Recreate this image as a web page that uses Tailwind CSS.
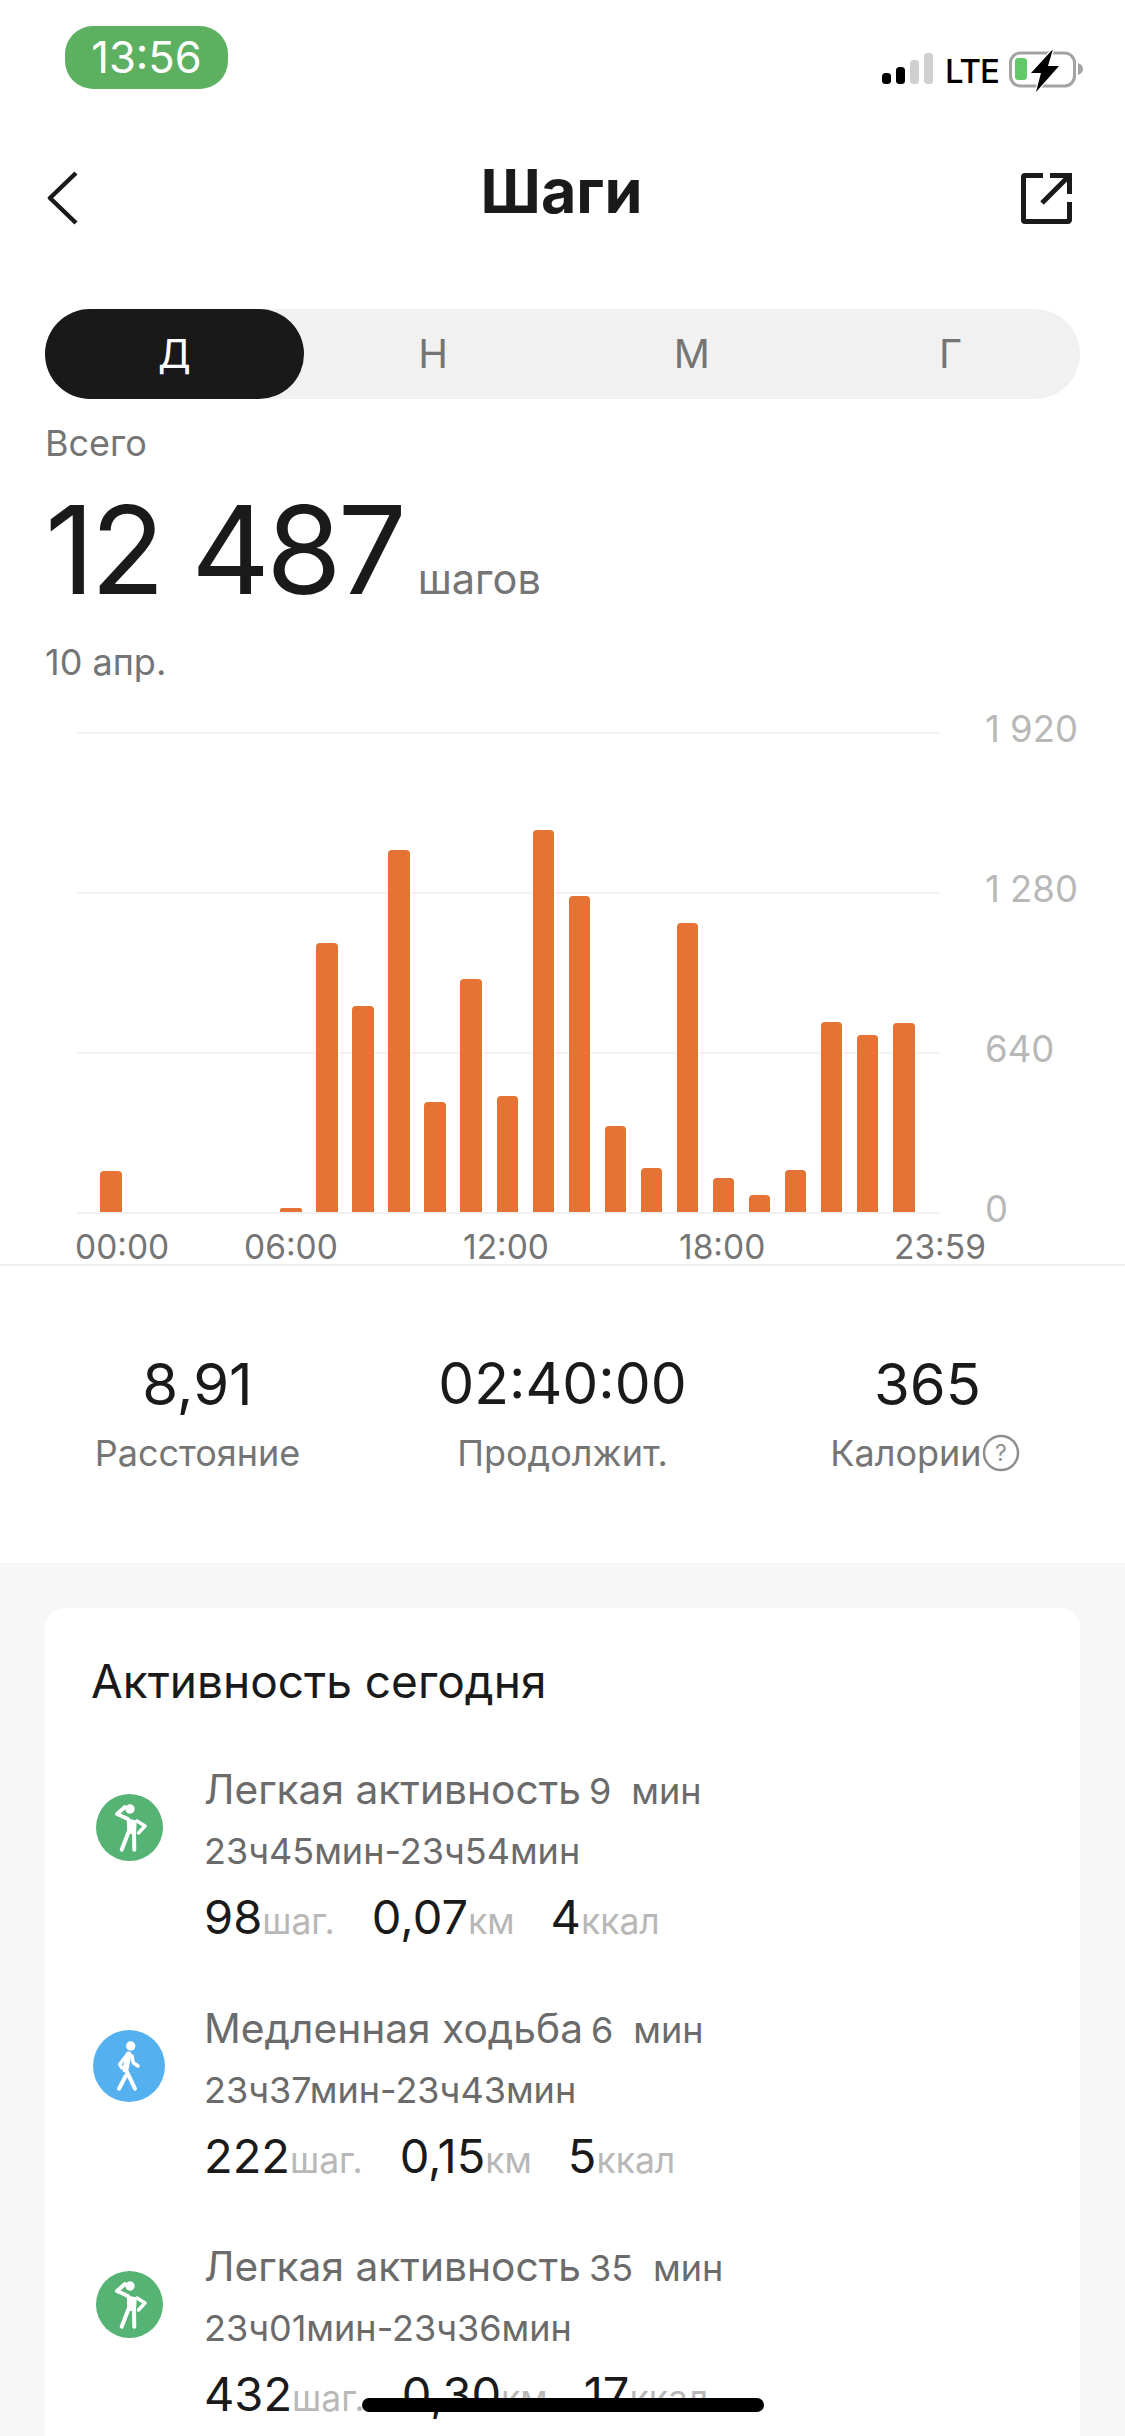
<!DOCTYPE html>
<html lang="ru">
<head>
    <meta charset="UTF-8">
    <meta name="viewport" content="width=device-width, initial-scale=1.0">
    <title>Шаги</title>
    <script src="https://cdn.jsdelivr.net/npm/@tailwindcss/browser@4"></script>
</head>
<body class="bg-white">
    <div class="relative w-[1125px] h-[2436px] overflow-hidden bg-white font-['Inter','Liberation_Sans',sans-serif] text-[#1a1a1a]">

        <!-- status bar -->
        <div class="flex justify-between items-start h-[104px] pt-[26px] pl-[65px] pr-[40px]">
            <div class="flex items-center justify-center w-[163px] h-[63px] rounded-[28px] bg-[#5cb05f] text-white text-[43.500px]">13:56</div>
            <svg class="mt-[24px]" width="205" height="42" viewBox="880 50 205 42">
                <rect x="882" y="73" width="9" height="11" rx="3.5" fill="#000"/>
                <rect x="896" y="67" width="9" height="17" rx="3.5" fill="#000"/>
                <rect x="910" y="60" width="9" height="24" rx="3.5" fill="#cfcfcf"/>
                <rect x="924" y="53" width="9" height="31" rx="3.5" fill="#cfcfcf"/>
                <text x="945" y="83" font-family="Inter" font-size="33" font-weight="500" letter-spacing="-1" fill="#000">LTE</text>
                <rect x="1010.5" y="53" width="64" height="33" rx="10" fill="none" stroke="#a3a3a3" stroke-width="3"/>
                <rect x="1015" y="58" width="12" height="22" rx="3.5" fill="#62c86a"/>
                <path d="M1031 73 L1053 49 L1048 66 L1059 66 L1036 92 L1041 73 Z" fill="#000" stroke="#fff" stroke-width="2.5" paint-order="stroke"/>
                <path d="M1078 63 C1081 64 1083 66 1083 69 C1083 72 1081 74 1078 75 Z" fill="#a3a3a3"/>
            </svg>
        </div>

        <!-- header -->
        <div class="grid grid-cols-[1fr_auto_1fr] items-center h-[188px] pl-[47px] pr-[52px]">
            <svg width="32" height="54" viewBox="0 0 32 54" fill="none" stroke="#1a1a1a" stroke-width="4.5" stroke-linejoin="round"><path d="M29 2 L3 27 L29 52"/></svg>
            <h1 class="ml-[3px] pb-[14px] text-[61px] leading-none font-bold">Шаги</h1>
            <svg class="justify-self-end" width="52" height="52" viewBox="0 0 52 52" fill="none" stroke="#1a1a1a" stroke-width="5"><path d="M22 3.5 H4 A1.5 1.5 0 0 0 2.500 5 V48 A1.500 1.500 0 0 0 4 49.500 H47 A1.500 1.500 0 0 0 48.500 48 V30"/><path d="M21 31 L47 5"/><path d="M29 3.500 H48.500 V22"/></svg>
        </div>

        <!-- period tabs -->
        <div class="mt-[17px] mx-[45px] grid grid-cols-4 h-[90px] rounded-full bg-[#f1f1f1] text-[40px] text-[#757575]">
            <div class="flex items-center justify-center rounded-full bg-[#191919] text-white">Д</div>
            <div class="flex items-center justify-center">Н</div>
            <div class="flex items-center justify-center">М</div>
            <div class="flex items-center justify-center">Г</div>
        </div>

        <!-- total -->
        <div class="pl-[45px] pt-[23px]">
            <div class="text-[36px] leading-[42px] text-[#757575]">Всего</div>
            <div class="flex items-baseline gap-[15px] mt-[24px] h-[124px]">
                <span class="text-[122px] leading-[124px] tracking-[-4px]">12 487</span>
                <span class="text-[41.500px] text-[#757575]">шагов</span>
            </div>
            <div class="text-[36px] leading-[42px] mt-[29px] text-[#757575]">10 апр.</div>
        </div>

        <!-- chart -->
        <div class="relative mt-[29px] h-[480px]">
            <div class="absolute left-[77px] top-[20px] w-[863px] h-[482px] flex flex-col justify-between">
                <div class="h-[2px] bg-[#f4f4f4]"></div>
                <div class="h-[2px] bg-[#f4f4f4]"></div>
                <div class="h-[2px] bg-[#f4f4f4]"></div>
                <div class="h-[2px] bg-[#f0f0f0]"></div>
            </div>
            <div class="absolute left-[985px] -top-[4px] h-[522px] flex flex-col justify-between text-[36.500px] leading-[42px] text-[#b8b8b8]">
                <div>1 920</div>
                <div>1 280</div>
                <div>640</div>
                <div>0</div>
            </div>
            <div class="absolute left-[100px] top-[20px] h-[480px] flex items-end gap-[14.550px]">
                <div class="w-[21.500px] h-[41px] rounded-t-[4px] bg-[#e57335]"></div>
                <div class="w-[21.500px] h-[0px]"></div>
                <div class="w-[21.500px] h-[0px]"></div>
                <div class="w-[21.500px] h-[0px]"></div>
                <div class="w-[21.500px] h-[0px]"></div>
                <div class="w-[21.500px] h-[4px] rounded-t-[2px] bg-[#e57335]"></div>
                <div class="w-[21.500px] h-[269px] rounded-t-[4px] bg-[#e57335]"></div>
                <div class="w-[21.500px] h-[206px] rounded-t-[4px] bg-[#e57335]"></div>
                <div class="w-[21.500px] h-[362px] rounded-t-[4px] bg-[#e57335]"></div>
                <div class="w-[21.500px] h-[110px] rounded-t-[4px] bg-[#e57335]"></div>
                <div class="w-[21.500px] h-[233px] rounded-t-[4px] bg-[#e57335]"></div>
                <div class="w-[21.500px] h-[116px] rounded-t-[4px] bg-[#e57335]"></div>
                <div class="w-[21.500px] h-[382px] rounded-t-[4px] bg-[#e57335]"></div>
                <div class="w-[21.500px] h-[316px] rounded-t-[4px] bg-[#e57335]"></div>
                <div class="w-[21.500px] h-[86px] rounded-t-[4px] bg-[#e57335]"></div>
                <div class="w-[21.500px] h-[44px] rounded-t-[4px] bg-[#e57335]"></div>
                <div class="w-[21.500px] h-[289px] rounded-t-[4px] bg-[#e57335]"></div>
                <div class="w-[21.500px] h-[34px] rounded-t-[4px] bg-[#e57335]"></div>
                <div class="w-[21.500px] h-[17px] rounded-t-[4px] bg-[#e57335]"></div>
                <div class="w-[21.500px] h-[42px] rounded-t-[4px] bg-[#e57335]"></div>
                <div class="w-[21.500px] h-[190px] rounded-t-[4px] bg-[#e57335]"></div>
                <div class="w-[21.500px] h-[177px] rounded-t-[4px] bg-[#e57335]"></div>
                <div class="w-[21.500px] h-[189px] rounded-t-[4px] bg-[#e57335]"></div>
            </div>
        </div>
        <div class="relative h-[34px] mt-[38px] text-[33.500px] leading-[34px] text-[#757575]">
            <span class="absolute left-[75px] top-0">00:00</span>
            <span class="absolute left-[244px] top-0">06:00</span>
            <span class="absolute left-[463px] top-0">12:00</span>
            <span class="absolute left-[679px] top-0">18:00</span>
            <span class="absolute left-[894px] top-0">23:59</span>
        </div>

        <!-- summary -->
        <div class="border-t-2 border-[#f0f0f0] grid grid-cols-[395px_335px_395px] h-[299px] pt-[85px] text-center">
            <div>
                <div class="text-[58px] leading-[66px]">8,91</div>
                <div class="mt-[14px] text-[36px] leading-[44px] text-[#757575]">Расстояние</div>
            </div>
            <div>
                <div class="text-[57px] leading-[66px]">02:40:00</div>
                <div class="mt-[14px] text-[36px] leading-[44px] text-[#757575]">Продолжит.</div>
            </div>
            <div>
                <div class="text-[58px] leading-[66px]">365</div>
                <div class="mt-[14px] pr-[5px] flex justify-center items-center text-[36px] leading-[44px] text-[#757575]">Калории<svg width="38" height="38" viewBox="0 0 38 38" fill="none" stroke="#8f8f8f" stroke-width="2.500"><circle cx="19" cy="19" r="17"/><text x="19" y="27" text-anchor="middle" font-family="Inter" font-size="23" fill="#8f8f8f" stroke="none">?</text></svg></div>
            </div>
        </div>

        <!-- activity list -->
        <div class="bg-[#f7f7f7] h-[900px] pt-[45px] px-[45px]">
            <div class="bg-white rounded-[20px] h-[900px] pt-[48px] pl-[46px]">
                <h2 class="text-[46px] leading-[50px]">Активность сегодня</h2>

                <div class="flex mt-[59px]">
                    <div class="w-[113px] pt-[29px] pl-[5px]">
                        <svg width="67" height="67" viewBox="0 0 67 67"><circle cx="33.500" cy="33.500" r="33.500" fill="#55b374"/><circle cx="34" cy="15" r="4.700" fill="#fff"/><path d="M32 25 L21 20 L29 13" fill="none" stroke="#fff" stroke-width="4" stroke-linecap="round" stroke-linejoin="round"/><path d="M41 27 L49 32 L42.500 39" fill="none" stroke="#fff" stroke-width="3.500" stroke-linecap="round" stroke-linejoin="round"/><path d="M30.700 24 L40.700 26.700 L40 40 L31.300 40 Z" fill="#fff"/><path d="M32.500 38 L25.700 55.700 M38 38 L38.300 55.700" fill="none" stroke="#fff" stroke-width="4" stroke-linecap="round"/></svg>
                    </div>
                    <div>
                        <div class="flex items-baseline h-[50px] text-[40.700px] leading-[50px] text-[#6b6b6b]">Легкая активность<span class="ml-[8px] text-[36px]">9</span><span class="ml-[20px] text-[36px]">мин</span></div>
                        <div class="mt-[11px] text-[36px] leading-[50px] text-[#6b6b6b]">23ч45мин-23ч54мин</div>
                        <div class="mt-[13px] flex items-baseline h-[56px] text-[47px] leading-[56px]"><span>98</span><span class="text-[35.500px] text-[#b8b8b8]">шаг.</span><span class="ml-[37px]">0,07</span><span class="text-[35.500px] text-[#b8b8b8]">км</span><span class="ml-[36px]">4</span><span class="text-[35.500px] text-[#b8b8b8]">ккал</span></div>
                    </div>
                </div>

                <div class="flex mt-[59px]">
                    <div class="w-[113px] pt-[26px] pl-[2px]">
                        <svg width="72" height="72" viewBox="0 0 72 72"><circle cx="36" cy="36" r="36" fill="#54b0ef"/><circle cx="37.700" cy="16" r="4.700" fill="#fff"/><path d="M35.500 24.500 L32.500 39.500" fill="none" stroke="#fff" stroke-width="6" stroke-linecap="round"/><path d="M34.300 24.500 L26.700 34.300 L28.700 37.700 M39 26 L40.300 32.700 L45 36" fill="none" stroke="#fff" stroke-width="3.500" stroke-linecap="round" stroke-linejoin="round"/><path d="M32.700 39.300 L42 58.700 M32.700 46 L26 58.700" fill="none" stroke="#fff" stroke-width="4" stroke-linecap="round"/></svg>
                    </div>
                    <div>
                        <div class="flex items-baseline h-[50px] text-[40.700px] leading-[50px] text-[#6b6b6b]">Медленная ходьба<span class="ml-[8px] text-[36px]">6</span><span class="ml-[20px] text-[36px]">мин</span></div>
                        <div class="mt-[11px] text-[36px] leading-[50px] text-[#6b6b6b]">23ч37мин-23ч43мин</div>
                        <div class="mt-[13px] flex items-baseline h-[56px] text-[47px] leading-[56px]"><span>222</span><span class="text-[35.500px] text-[#b8b8b8]">шаг.</span><span class="ml-[37px]">0,15</span><span class="text-[35.500px] text-[#b8b8b8]">км</span><span class="ml-[36px]">5</span><span class="text-[35.500px] text-[#b8b8b8]">ккал</span></div>
                    </div>
                </div>

                <div class="flex mt-[58px]">
                    <div class="w-[113px] pt-[29px] pl-[5px]">
                        <svg width="67" height="67" viewBox="0 0 67 67"><circle cx="33.500" cy="33.500" r="33.500" fill="#55b374"/><circle cx="34" cy="15" r="4.700" fill="#fff"/><path d="M32 25 L21 20 L29 13" fill="none" stroke="#fff" stroke-width="4" stroke-linecap="round" stroke-linejoin="round"/><path d="M41 27 L49 32 L42.500 39" fill="none" stroke="#fff" stroke-width="3.500" stroke-linecap="round" stroke-linejoin="round"/><path d="M30.700 24 L40.700 26.700 L40 40 L31.300 40 Z" fill="#fff"/><path d="M32.500 38 L25.700 55.700 M38 38 L38.300 55.700" fill="none" stroke="#fff" stroke-width="4" stroke-linecap="round"/></svg>
                    </div>
                    <div>
                        <div class="flex items-baseline h-[50px] text-[40.700px] leading-[50px] text-[#6b6b6b]">Легкая активность<span class="ml-[8px] text-[36px]">35</span><span class="ml-[20px] text-[36px]">мин</span></div>
                        <div class="mt-[11px] text-[36px] leading-[50px] text-[#6b6b6b]">23ч01мин-23ч36мин</div>
                        <div class="mt-[13px] flex items-baseline h-[56px] text-[47px] leading-[56px]"><span>432</span><span class="text-[35.500px] text-[#b8b8b8]">шаг.</span><span class="ml-[37px]">0,30</span><span class="text-[35.500px] text-[#b8b8b8]">км</span><span class="ml-[36px]">17</span><span class="text-[35.500px] text-[#b8b8b8]">ккал</span></div>
                    </div>
                </div>
            </div>
        </div>

        <!-- home indicator -->
        <div class="absolute left-[362px] top-[2398px] w-[402px] h-[14px] rounded-full bg-black"></div>
    </div>
</body>
</html>
